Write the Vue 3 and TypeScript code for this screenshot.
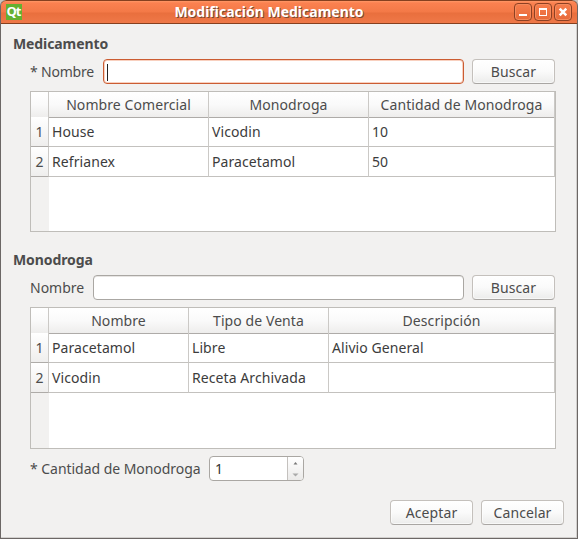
<script setup lang="ts">
import { ref } from 'vue'

interface Table {
  kind: string
  columns: string[]
  rows: string[][]
}

const drugs: Table = {
  kind: 'drugs',
  columns: ['Nombre Comercial', 'Monodroga', 'Cantidad de Monodroga'],
  rows: [
    ['House', 'Vicodin', '10'],
    ['Refrianex', 'Paracetamol', '50'],
  ],
}

const compounds: Table = {
  kind: 'compounds',
  columns: ['Nombre', 'Tipo de Venta', 'Descripción'],
  rows: [
    ['Paracetamol', 'Libre', 'Alivio General'],
    ['Vicodin', 'Receta Archivada', ''],
  ],
}

const sections = [
  { title: 'Medicamento', label: '* Nombre', focused: true, table: drugs },
  { title: 'Monodroga', label: 'Nombre', focused: false, table: compounds },
]

const amount = ref(1)
</script>

<template>
  <div class="desktop">
    <div class="window">
      <header class="titlebar">
        <span class="logo">Qt</span>
        <h1>Modificación Medicamento</h1>
        <div class="controls">
          <button class="control" aria-label="Minimizar">
            <svg width="16" height="16" viewBox="0 0 16 16"><path d="M4 10h8v2H4z" fill="#fff" /></svg>
          </button>
          <button class="control" aria-label="Maximizar">
            <svg width="16" height="16" viewBox="0 0 16 16"><path d="M4 4h8v8H4zM5 6v5h6V6z" fill="#fff" fill-rule="evenodd" /></svg>
          </button>
          <button class="control" aria-label="Cerrar">
            <svg width="16" height="16" viewBox="0 0 16 16"><path d="M4.7 4.7l6.6 6.6M11.3 4.7l-6.6 6.6" stroke="#fff" stroke-width="2.5" /></svg>
          </button>
        </div>
      </header>

      <main class="content">
        <section v-for="section in sections" :key="section.title" class="group">
          <h2>{{ section.title }}</h2>
          <div class="search">
            <label>{{ section.label }}</label>
            <div class="field" :class="{ focused: section.focused }">
              <span v-if="section.focused" class="caret"></span>
            </div>
            <button class="btn">Buscar</button>
          </div>
          <div class="table" :class="section.table.kind">
            <div class="row head">
              <span class="index"></span>
              <span v-for="column in section.table.columns" :key="column" class="cell">{{ column }}</span>
            </div>
            <div v-for="(row, r) in section.table.rows" :key="r" class="row">
              <span class="index">{{ r + 1 }}</span>
              <span v-for="(value, c) in row" :key="c" class="cell">{{ value }}</span>
            </div>
            <div class="gutter"></div>
          </div>
        </section>

        <div class="amount">
          <label>* Cantidad de Monodroga</label>
          <div class="spin">
            <span class="value">{{ amount }}</span>
            <span class="arrows">
              <svg width="15" height="23" viewBox="0 0 15 23">
                <path d="M5.5 7.5h4L7.5 5z" fill="#777" />
                <path d="M4.5 16.5h6l-3 3z" fill="#aaa" />
              </svg>
            </span>
          </div>
        </div>

        <footer class="actions">
          <button class="btn">Aceptar</button>
          <button class="btn">Cancelar</button>
        </footer>
      </main>
    </div>
  </div>
</template>

<style>
body {
  margin: 0;
  overflow: hidden;
}
</style>

<style scoped>
* {
  box-sizing: border-box;
}
.desktop {
  width: 578px;
  height: 539px;
  background: #c9c5c1;
  font: 14px/20px 'Noto Sans', 'Open Sans', sans-serif;
  color: #4c4c4c;
}
.window {
  height: 539px;
  border: 1px solid #6c6765;
  border-top: 0;
  border-radius: 6px 6px 0 0;
  background: #f2f1f0;
  box-shadow: inset -1px -1px 0 #d2d0ce;
  overflow: hidden;
}
.titlebar {
  display: flex;
  align-items: center;
  height: 24px;
  margin: 0 -1px;
  padding: 0 5px 0 5px;
  border: 1px solid #86401f;
  border-radius: 6px 6px 0 0;
  background: linear-gradient(#ff9866 0, #fb8150 2px, #f37947 11px, #e96f3d 12px, #ef7848 100%);
}
.logo {
  width: 16px;
  height: 16px;
  background: #64b031;
  color: #fff;
  font: 700 13px/15px 'Open Sans', sans-serif;
  text-align: center;
  letter-spacing: -1px;
  text-indent: -1px;
}
h1 {
  flex: 1;
  margin: 0 0 0 2px;
  color: #fff;
  font-size: 14px;
  line-height: 20px;
  font-weight: 700;
  text-align: center;
  text-shadow: 1px 1px 0 #7a4832;
}
.controls {
  display: flex;
  gap: 2px;
}
.control {
  width: 18px;
  height: 18px;
  padding: 0;
  border: 1px solid #8d4023;
  border-radius: 4px;
  background: linear-gradient(#f77e4d, #e76a3a);
  box-shadow: inset 0 0 0 1px #f68b5c;
}
.control svg {
  display: block;
}
.content {
  padding: 10px 13px 0 12px;
}
.group {
  height: 216px;
}
.group:nth-child(2) {
  height: 206px;
}
h2 {
  height: 20px;
  margin: 0 0 5px;
  font-size: 14px;
  line-height: 20px;
  font-weight: 700;
  letter-spacing: -0.1px;
}
.search {
  display: flex;
  align-items: center;
  height: 25px;
  margin: 0 9px 7px 17px;
}
label {
  white-space: pre;
}
.search label {
  margin-right: 9px;
}
.group:nth-child(1) label {
  width: 64px;
  letter-spacing: -0.2px;
}
.group:nth-child(2) label {
  width: 54px;
}
.field {
  flex: 1;
  height: 25px;
  margin-right: 8px;
  padding: 4px 3px;
  border: 1px solid #aaa7a3;
  border-radius: 4px;
  background: #fff;
  box-shadow: inset 0 1px 0 #e7e5e3;
}
.focused {
  border-color: #cb5c32;
  box-shadow: inset 0 0 0 1px #f8d0bf;
}
.caret {
  display: block;
  width: 1px;
  height: 17px;
  background: #222;
}
.btn {
  width: 83px;
  height: 25px;
  padding: 0;
  border: 1px solid #c4c0bc;
  border-bottom-color: #a9a6a3;
  border-radius: 4px;
  background: linear-gradient(#fff, #fafafa 50%, #ececeb);
  box-shadow: inset 0 0 0 1px rgba(255, 255, 255, 0.6);
  color: #4c4c4c;
  font: inherit;
  letter-spacing: 0.1px;
}
.table {
  width: 526px;
  height: 141px;
  margin-left: 17px;
  display: flex;
  flex-direction: column;
  border: 1px solid #bfbdb9;
  background: #fff;
}
.table.compounds {
  height: 142px;
}
.row {
  display: grid;
  height: 30px;
  flex: none;
  line-height: 29px;
  letter-spacing: 0.08px;
  color: #3c3c3c;
}
.drugs .row {
  grid-template-columns: 18px 160px 160px 186px;
}
.compounds .row {
  grid-template-columns: 18px 140px 140px 226px;
}
.row span {
  border-right: 1px solid #cbc9c6;
  border-bottom: 1px solid #c3c1be;
  white-space: nowrap;
}
.cell {
  padding-left: 3px;
}
.row .index {
  text-align: center;
  background: linear-gradient(#fff, #efeeed);
  border-bottom-color: #aeaba8;
  color: #4c4c4c;
}
.head {
  height: 25px;
  line-height: 25px;
}
.row.head span {
  padding: 0;
  color: #4c4c4c;
  text-align: center;
  background: linear-gradient(#fff, #fafafa 50%, #eeedec);
  border-bottom-color: #aeaba8;
}
.gutter {
  flex: 1;
  width: 18px;
  background: #f2f1f0;
}
.amount {
  display: flex;
  align-items: center;
  height: 25px;
  margin-left: 17px;
}
.amount label {
  width: 179px;
  letter-spacing: -0.04px;
}
.spin {
  display: flex;
  width: 95px;
  height: 25px;
  border: 1px solid #aaa7a3;
  border-radius: 4px;
  background: #fff;
  overflow: hidden;
}
.value {
  flex: 1;
  padding-left: 5px;
  line-height: 23px;
  color: #333;
}
.arrows {
  width: 16px;
  border-left: 1px solid #c4c1be;
  background: linear-gradient(#fff, #ebeae9);
}
.arrows svg {
  display: block;
}
.actions {
  display: flex;
  justify-content: flex-end;
  gap: 8px;
  margin-top: 19px;
}
</style>
